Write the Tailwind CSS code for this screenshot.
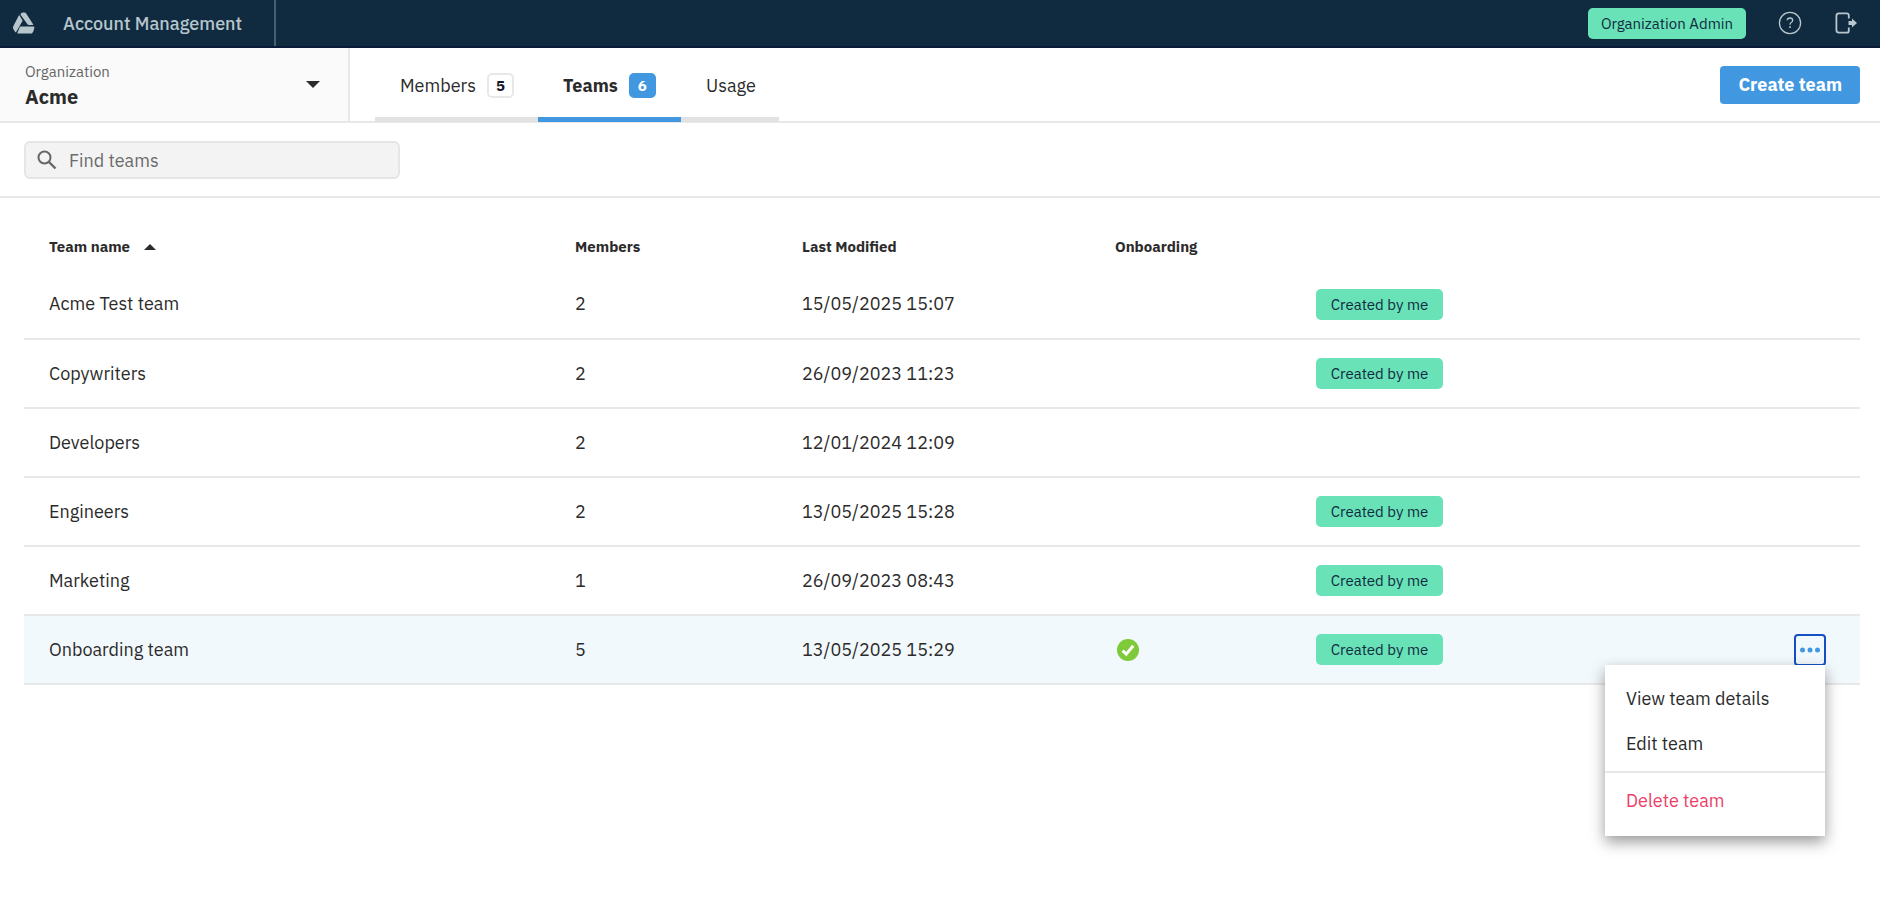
<!DOCTYPE html>
<html lang="en">
<head>
<meta charset="utf-8">
<meta name="viewport" content="width=device-width, initial-scale=1">
<title>Account Management</title>
<script src="https://cdn.jsdelivr.net/npm/@tailwindcss/browser@4"></script>
</head>
<body class="min-h-screen bg-white font-['IBM_Plex_Sans',Roboto,sans-serif] text-lg leading-6 text-[#2b2b2b]">
<header class="flex h-12 items-stretch justify-between border-b-2 border-[#0a1a38] bg-[#102b40] pr-[22px]">
  <div class="flex items-center gap-7 border-r-2 border-[#47606f] pr-8 pl-3">
    <svg class="size-[23px]" viewBox="0 0 23 23" fill="#b7c5cc" aria-hidden="true">
      <path d="M8.800 1.700Q9.600.6 11 .6h1.200q1.500 0 2.300 1.400l6.600 10.200q.4.900-.6.900h-3.600q-1 0-1.600-1L8.700 3q-.4-.6.100-1.300z"/>
      <path d="M7.600 3.500l3 5.200-6.400 11.200q-.6.900-1.200-.1l-1.800-3.100q-.6-1.200.1-2.400L6.800 3.600q.4-.6.800-.1z"/>
      <path d="M8.600 14.500h13q.9 0 .8.900-.4 3.600-2.400 6.200H6.200q-1.400 0-.700-1.200l2.200-5.200q.2-.7.900-.7z"/>
    </svg>
    <h1 class="pt-0.5 font-medium text-[#b7c5cc]">Account Management</h1>
  </div>
  <div class="flex items-center">
    <span class="mr-8 rounded-[5px] bg-[#69e2b7] px-[13px] py-1 text-[15px] leading-[23px] text-[#102b40]">Organization Admin</span>
    <button type="button" aria-label="Help" class="mr-8">
      <svg class="size-6" viewBox="0 0 24 24" fill="none" stroke="#b7c5cc" stroke-width="1.300">
        <circle cx="12" cy="12" r="10.600"/>
        <path d="M9.200 9.300Q9.400 7 12 7q2.700 0 2.700 2.300 0 1.400-1.500 2.200-1.200.7-1.200 2.300"/>
        <path d="M12 15.300v1.800" stroke-width="1.600"/>
      </svg>
    </button>
    <button type="button" aria-label="Log out">
      <svg class="size-6" viewBox="0 0 24 24" fill="none" stroke="#b7c5cc" stroke-width="1.800">
        <path d="M14.800 7.500V4.300q0-2-2-2H5q-2.600 0-2.600 2.600v14.200q0 2.600 2.600 2.600h7.800q2 0 2-2v-3.200"/>
        <path d="M14.500 10h3.500V7.500l5 4.500-5 4.500V14h-3.500z" fill="#b7c5cc" stroke="none"/>
      </svg>
    </button>
  </div>
</header>

<div class="flex h-[75px] border-b-2 border-[#e8e8e8]">
  <button type="button" class="flex w-[350px] items-center justify-between border-r-2 border-[#e8e8e8] bg-[#fafafa] pr-7 pl-[25px] text-left">
    <span class="flex flex-col">
      <span class="text-[15px] leading-6 text-[#666]">Organization</span>
      <span class="text-xl leading-[26px] font-bold">Acme</span>
    </span>
    <svg class="h-[7px] w-[14px]" viewBox="0 0 14 7" fill="#2b2b2b" aria-hidden="true"><path d="M0 0h14L7 7z"/></svg>
  </button>
  <nav class="-mb-px ml-[25px] flex" aria-label="Sections">
    <a href="#members" class="flex w-[163px] items-center gap-[11px] border-b-5 border-[#e2e2e2] pt-2 pb-0.5 pl-[25px]">Members
      <span class="w-[27px] rounded-[5px] border-2 border-[#e8e8e8] text-center text-[15px] leading-[21px] font-bold text-[#16162b]">5</span></a>
    <a href="#teams" aria-current="page" class="flex w-[143px] items-center gap-[11px] border-b-5 border-[#4298e0] pt-2 pb-0.5 pl-[25px] font-bold">Teams
      <span class="w-[27px] rounded-[5px] border-2 border-[#4298e0] bg-[#4298e0] text-center text-[15px] leading-[21px] text-white">6</span></a>
    <a href="#usage" class="flex w-[98px] items-center border-b-5 border-[#e2e2e2] pt-2 pb-0.5 pl-[25px]">Usage</a>
  </nav>
  <div class="ml-auto flex items-center pr-5">
    <button type="button" class="h-[38px] rounded bg-[#4298e0] px-[18px] font-bold text-white">Create team</button>
  </div>
</div>

<div class="border-b-2 border-[#e8e8e8] pt-[18px] pb-[17px] pl-6">
  <label class="flex h-[38px] w-[376px] items-center gap-3 rounded-md border-2 border-[#e6e6e6] bg-[#f3f3f3] pl-[11px]">
    <svg class="size-5 shrink-0" viewBox="0 0 20 20" fill="none" stroke="#666" stroke-width="2" aria-hidden="true"><circle cx="7.500" cy="7.500" r="6"/><path d="M12 12l6.500 6.500" stroke-width="2.400"/></svg>
    <input type="search" placeholder="Find teams" aria-label="Find teams" class="w-full bg-transparent pt-0.5 outline-none placeholder:text-[#6b6b6b]">
  </label>
</div>

<main class="pr-5 pl-6">
  <table class="w-full table-fixed text-left">
    <colgroup><col class="w-[28.65%]"><col class="w-[12.36%]"><col class="w-[17.05%]"><col class="w-[10.95%]"><col><col class="w-[8%]"></colgroup>
    <thead>
      <tr class="text-[15px]">
        <th class="px-[25px] pt-[37px] pb-[11px] leading-6"><button type="button" class="flex items-center gap-3.5">Team name
          <svg class="h-1.5 w-3" viewBox="0 0 12 6" fill="#2b2b2b" aria-hidden="true"><path d="M0 6h12L6 0z"/></svg></button></th>
        <th class="px-[25px] pt-[37px] pb-[11px] leading-6">Members</th>
        <th class="px-[25px] pt-[37px] pb-[11px] leading-6">Last Modified</th>
        <th class="px-[25px] pt-[37px] pb-[11px] leading-6">Onboarding</th>
        <th></th><th></th>
      </tr>
    </thead>
    <tbody>
      <tr class="h-[69px] border-b-2 border-[#e8e8e8]">
        <td class="px-[25px]">Acme Test team</td><td class="px-[25px]">2</td><td class="px-[25px]">15/05/2025 15:07</td><td></td>
        <td class="px-[25px]"><span class="block h-[31px] w-[127px] rounded-[5px] bg-[#69e2b7] text-center text-[15px] leading-[31px] text-[#102b40]">Created by me</span></td><td></td>
      </tr>
      <tr class="h-[69px] border-b-2 border-[#e8e8e8]">
        <td class="px-[25px]">Copywriters</td><td class="px-[25px]">2</td><td class="px-[25px]">26/09/2023 11:23</td><td></td>
        <td class="px-[25px]"><span class="block h-[31px] w-[127px] rounded-[5px] bg-[#69e2b7] text-center text-[15px] leading-[31px] text-[#102b40]">Created by me</span></td><td></td>
      </tr>
      <tr class="h-[69px] border-b-2 border-[#e8e8e8]">
        <td class="px-[25px]">Developers</td><td class="px-[25px]">2</td><td class="px-[25px]">12/01/2024 12:09</td><td></td><td></td><td></td>
      </tr>
      <tr class="h-[69px] border-b-2 border-[#e8e8e8]">
        <td class="px-[25px]">Engineers</td><td class="px-[25px]">2</td><td class="px-[25px]">13/05/2025 15:28</td><td></td>
        <td class="px-[25px]"><span class="block h-[31px] w-[127px] rounded-[5px] bg-[#69e2b7] text-center text-[15px] leading-[31px] text-[#102b40]">Created by me</span></td><td></td>
      </tr>
      <tr class="h-[69px] border-b-2 border-[#e8e8e8]">
        <td class="px-[25px]">Marketing</td><td class="px-[25px]">1</td><td class="px-[25px]">26/09/2023 08:43</td><td></td>
        <td class="px-[25px]"><span class="block h-[31px] w-[127px] rounded-[5px] bg-[#69e2b7] text-center text-[15px] leading-[31px] text-[#102b40]">Created by me</span></td><td></td>
      </tr>
      <tr class="h-[69px] border-b-2 border-[#e8e8e8] bg-[#f2f9fd]">
        <td class="px-[25px]">Onboarding team</td><td class="px-[25px]">5</td><td class="px-[25px]">13/05/2025 15:29</td>
        <td class="px-[27px]"><svg class="size-[22px]" viewBox="0 0 22 22" role="img" aria-label="Onboarded"><circle cx="11" cy="11" r="11" fill="#7fca3a"/><path d="M5.600 11.700l3.600 3.400 7-8.400" fill="none" stroke="#fff" stroke-width="3"/></svg></td>
        <td class="px-[25px]"><span class="block h-[31px] w-[127px] rounded-[5px] bg-[#69e2b7] text-center text-[15px] leading-[31px] text-[#102b40]">Created by me</span></td>
        <td class="pr-[34px]">
          <div class="relative ml-auto size-8">
            <button type="button" aria-label="Team actions" aria-expanded="true" class="flex size-8 items-center justify-center rounded border-2 border-[#1450c4]">
              <svg class="h-[6px] w-5" viewBox="0 0 20 6" fill="#4298e0" aria-hidden="true"><circle cx="2.500" cy="3" r="2.500"/><circle cx="10" cy="3" r="2.500"/><circle cx="17.500" cy="3" r="2.500"/></svg>
            </button>
            <div role="menu" class="absolute top-[31px] right-px w-[220px] bg-white pt-3 pb-3 shadow-[0_6px_14px_rgba(0,0,0,0.4)]">
              <button type="button" role="menuitem" class="block h-[45px] w-full px-[21px] text-left">View team details</button>
              <button type="button" role="menuitem" class="block h-[45px] w-full px-[21px] text-left">Edit team</button>
              <div class="mt-1 border-t-2 border-[#e8e8e8] pt-1.5">
                <button type="button" role="menuitem" class="block h-[45px] w-full px-[21px] text-left text-[#ea4169]">Delete team</button>
              </div>
            </div>
          </div>
        </td>
      </tr>
    </tbody>
  </table>
</main>
</body>
</html>
